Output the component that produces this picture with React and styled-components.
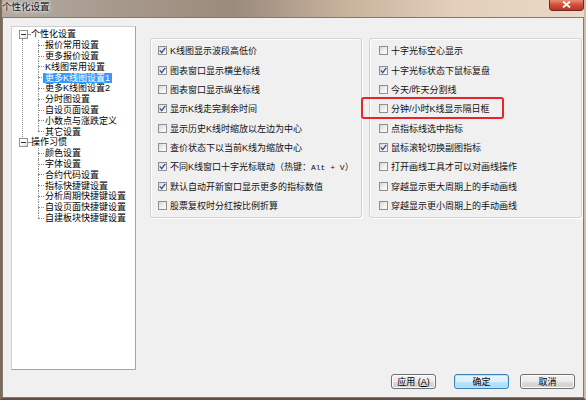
import React from 'react'
import styled, { createGlobalStyle } from 'styled-components'

const Global = createGlobalStyle`
  html, body { margin: 0; padding: 0; background: #fff; }
  * { box-sizing: border-box; }
`;

// Latin first so the tight tree rows keep a short line box; CJK falls back
const FONT = `"Liberation Sans", "Noto Sans CJK SC", sans-serif`;

const Window = styled.div`
  width: 586px;
  height: 400px;
  display: flex;
  flex-direction: column;
  border-left: 2px solid #7a6a5b;
  border-right: 2px solid #d3bda7;
  border-bottom: 2px solid #5e5045;
  background: linear-gradient(90deg, #b4aba3 0%, #a59789 22%, #9b8b7d 40%, #c6b19b 58%, #e3cfba 78%, #ead9c7 100%);
  font-family: ${FONT};
`;

const TitleBar = styled.div`
  height: 17px;
  display: flex;
  align-items: flex-start;
`;

const Title = styled.div`
  font-size: 9.5px;
  line-height: 14px;
  color: #111;
  text-shadow: 0 0 5px #fff, 0 0 3px #fff;
`;

const CloseButton = styled.div`
  margin-left: auto;
  width: 35px;
  height: 11px;
  display: flex;
  justify-content: center;
  align-items: flex-start;
  padding-top: 1px;
  border: 1px solid #6e2a20;
  border-top: none;
  border-radius: 0 0 4px 4px;
  background: linear-gradient(180deg, #e98d78 0%, #d2533f 45%, #bb3322 100%);
`;

const Client = styled.div`
  flex: 1;
  display: flex;
  flex-direction: column;
  background: #f0f0f0;
  border: 1px solid #84796f;
  padding: 8px 0 0 8px;
`;

const Main = styled.div`
  display: flex;
  align-items: flex-start;
  gap: 14px;
`;

const TreeBox = styled.div`
  width: 125px;
  height: 344px;
  background: #fff;
  border: 1px solid #a3a3a8;
  border-left-color: #cfcfd2;
  border-top-color: #cfcfd2;
  padding: 2px 0 0 6px;
  font-size: 9px;
  line-height: 10.8px;
  color: #000;
`;

const Section = styled.div`
  position: relative;
  &::before {
    content: '';
    display: ${p => (p.$last ? 'none' : 'block')};
    position: absolute;
    left: 4px;
    top: 10px;
    bottom: 0;
    border-left: 1px dotted #8c8c8c;
  }
`;

const RootRow = styled.div`
  height: 10.8px;
  display: flex;
  align-items: center;
`;

const Expander = styled.span`
  width: 9px;
  height: 9px;
  margin-left: 1px;
  border: 1px solid #919191;
  background: linear-gradient(135deg, #fff 40%, #dcdcdc);
  display: flex;
  align-items: center;
  justify-content: center;
  &::after {
    content: '';
    width: 5px;
    height: 1px;
    background: #333;
  }
`;

const Leader = styled.span`
  width: 2px;
  border-top: 1px dotted #8c8c8c;
  margin-right: 1px;
`;

const ChildRow = styled.div`
  position: relative;
  height: 10.8px;
  padding-left: 27px;
  display: flex;
  align-items: center;
  &::before {
    content: '';
    position: absolute;
    left: 20px;
    top: 5px;
    width: 6px;
    border-top: 1px dotted #8c8c8c;
  }
  &::after {
    content: '';
    position: absolute;
    left: 20px;
    top: 0;
    height: ${p => (p.$last ? '5px' : '100%')};
    border-left: 1px dotted #8c8c8c;
  }
`;

const Label = styled.span`
  white-space: nowrap;
  height: 10px;
  line-height: 10px;
  padding: 0 2px;
  margin-left: -2px;
  background: ${p => (p.$selected ? '#3399ff' : 'transparent')};
  color: ${p => (p.$selected ? '#fff' : '#000')};
`;

const Panels = styled.div`
  display: flex;
  gap: 7px;
  margin-top: 12px;
`;

const Group = styled.div`
  position: relative;
  width: ${p => p.$w}px;
  height: 180px;
  border: 1px solid #d3d3d3;
  border-radius: 3px;
  box-shadow: inset 1px 1px 0 #fff, 1px 1px 0 #fff;
  padding: 2px 0 0 ${p => p.$pad}px;
`;

const CheckRow = styled.div`
  height: 19.35px;
  display: flex;
  align-items: center;
  gap: 3px;
  font-size: 9px;
  color: #111;
  white-space: nowrap;
`;

const Box = styled.span`
  width: 9px;
  height: 9px;
  flex: none;
  border: 1px solid #8e8f8f;
  background: linear-gradient(135deg, #d8d8d8 0%, #f0f0f0 55%, #fdfdfd 100%);
  display: flex;
  align-items: center;
  justify-content: center;
`;

const Mono = styled.span`
  font-family: "Liberation Mono", monospace;
  font-size: 8px;
`;

const Highlight = styled.div`
  position: absolute;
  left: -9px;
  top: 58px;
  width: 143px;
  height: 22px;
  border: 2px solid #e8242a;
  border-radius: 3px;
`;

const ButtonBar = styled.div`
  display: flex;
  justify-content: flex-end;
  margin-top: 4px;
  padding-right: 8px;
`;

const Button = styled.div`
  width: ${p => p.$w}px;
  height: 15px;
  margin-left: ${p => p.$gap}px;
  display: flex;
  align-items: center;
  justify-content: center;
  font-size: 9px;
  color: #000;
  white-space: pre;
  border: 1px solid ${p => (p.$default ? '#3c7fb1' : '#707070')};
  border-radius: 3px;
  background: ${p =>
    p.$default
      ? 'linear-gradient(180deg, #eaf6fd 0%, #d9f0fc 50%, #bee6fd 51%, #a7d9f5 100%)'
      : 'linear-gradient(180deg, #f2f2f2 0%, #ebebeb 50%, #dddddd 51%, #cfcfcf 100%)'};
  box-shadow: inset 0 0 0 1px ${p => (p.$default ? '#bde5fa' : '#fcfcfc')};
`;

const Check = () => (
  <svg width="7" height="7" viewBox="0 0 7 7">
    <path d="M0.8 3.4 L2.7 5.6 L6.3 0.9" fill="none" stroke="#3a4f96" strokeWidth="1.4" />
  </svg>
);

const tree = [
  {
    label: '个性化设置',
    children: ['报价常用设置', '更多报价设置', 'K线图常用设置', '更多K线图设置1', '更多K线图设置2', '分时图设置', '自设页面设置', '小数点与涨跌定义', '其它设置'],
  },
  {
    label: '操作习惯',
    children: ['颜色设置', '字体设置', '合约代码设置', '指标快捷键设置', '分析周期快捷键设置', '自设页面快捷键设置', '自建板块快捷键设置'],
  },
];

const leftOptions = [
  ['K线图显示波段高低价', true],
  ['图表窗口显示横坐标线', true],
  ['图表窗口显示纵坐标线', false],
  ['显示K线走完剩余时间', true],
  ['显示历史K线时缩放以左边为中心', false],
  ['查价状态下以当前K线为缩放中心', false],
  [<>不同K线窗口十字光标联动（热键：<Mono>Alt + V</Mono>）</>, true],
  ['默认自动开新窗口显示更多的指标数值', true],
  ['股票复权时分红按比例折算', false],
];

const rightOptions = [
  ['十字光标空心显示', false],
  ['十字光标状态下鼠标复盘', true],
  ['今天/昨天分割线', false],
  ['分钟/小时K线显示隔日框', false],
  ['点指标线选中指标', false],
  ['鼠标滚轮切换副图指标', true],
  ['打开画线工具才可以对画线操作', false],
  ['穿越显示更大周期上的手动画线', false],
  ['穿越显示更小周期上的手动画线', false],
];

const Options = ({ items }) =>
  items.map(([text, on], i) => (
    <CheckRow key={i}>
      <Box>{on && <Check />}</Box>
      <span>{text}</span>
    </CheckRow>
  ));

export default function App() {
  return (
    <>
      <Global />
      <Window>
        <TitleBar>
          <Title>个性化设置</Title>
          <CloseButton>
            <svg width="9" height="7" viewBox="0 0 9 7">
              <path d="M1 0.5 L8 6.5 M8 0.5 L1 6.5" stroke="#fff" strokeWidth="1.8" />
            </svg>
          </CloseButton>
        </TitleBar>
        <Client>
          <Main>
            <TreeBox>
              {tree.map((node, n) => (
                <Section key={node.label} $last={n === tree.length - 1}>
                  <RootRow>
                    <Expander />
                    <Leader />
                    <Label>{node.label}</Label>
                  </RootRow>
                  {node.children.map((c, i) => (
                    <ChildRow key={c} $last={i === node.children.length - 1}>
                      <Label $selected={c === '更多K线图设置1'}>{c}</Label>
                    </ChildRow>
                  ))}
                </Section>
              ))}
            </TreeBox>
            <Panels>
              <Group $w={212} $pad={7}>
                <Options items={leftOptions} />
              </Group>
              <Group $w={213} $pad={9}>
                <Options items={rightOptions} />
                <Highlight />
              </Group>
            </Panels>
          </Main>
          <ButtonBar>
            <Button $w={45} $gap={0}>应用 (<u>A</u>)</Button>
            <Button $w={55} $gap={18} $default>确定</Button>
            <Button $w={55} $gap={11}>取消</Button>
          </ButtonBar>
        </Client>
      </Window>
    </>
  );
}
